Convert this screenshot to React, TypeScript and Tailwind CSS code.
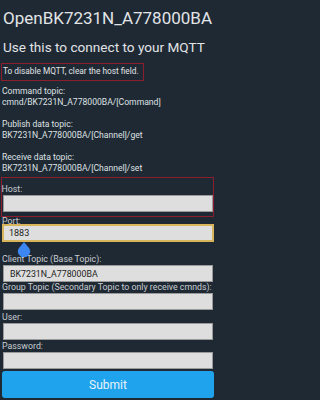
const font = { fontFamily: 'Roboto, "Noto Sans", sans-serif' };

function Field({ label, value, className = '' }: { label: string; value?: string; className?: string }) {
  return (
    <div className={className}>
      <label className="block text-[8.8px] leading-[11px] pl-[1px] text-[#c9cdd1]">{label}</label>
      <input
        readOnly
        value={value ?? ''}
        className="block w-[210px] h-[17px] ml-[2px] px-[6px] bg-[#dedede] border border-[#9a9a9a] text-[8.8px] text-[#222] outline-none"
      />
    </div>
  );
}

export default function App() {
  return (
    <div className="w-full min-h-[400px] bg-[#1e2934]">
      <div className="w-[217px] h-[400px] overflow-hidden text-[#e2e4e6] pl-[1px] pr-[3px]" style={font}>
        <h1 className="text-[17px] leading-[22px] pt-[7px] pl-[2px]">OpenBK7231N_A778000BA</h1>
        <h2 className="text-[13.6px] leading-[18px] mt-[9px] pl-[2px]">Use this to connect to your MQTT</h2>

        {/* warning */}
        <p className="mt-[7px] w-[143px] h-[18px] border-[1.5px] border-[#8c1d2c] text-[8.3px] leading-[15px] pl-[1px] whitespace-nowrap">
          To disable MQTT, clear the host field.
        </p>

        {/* topics */}
        <div className="mt-[5px] text-[8.6px] leading-[11px] pl-[1px] text-[#dfe1e3]">
          <div>Command topic:</div>
          <div>cmnd/BK7231N_A778000BA/[Command]</div>
          <div className="h-[11px]" />
          <div>Publish data topic:</div>
          <div>BK7231N_A778000BA/[Channel]/get</div>
          <div className="h-[11px]" />
          <div>Receive data topic:</div>
          <div>BK7231N_A778000BA/[Channel]/set</div>
        </div>

        <form className="mt-[3px]" onSubmit={(e) => e.preventDefault()}>
          <div className="w-[213px] h-[40px] border-[1.5px] border-[#8c1d2c] pt-[6px]">
            <Field label="Host:" className="-ml-[1.5px]" />
          </div>

          <div className="relative">
            <label className="block text-[8.8px] leading-[8px] pl-[1px] text-[#c9cdd1]">Port:</label>
            <input
              readOnly
              value="1883"
              className="block w-[212px] h-[18px] ml-[1px] mt-[-1px] px-[5px] bg-[#dedede] border-2 border-[#d8b45a] text-[9px] text-[#222] outline-none"
            />
            <svg className="absolute left-[16px] top-[25px]" width="14" height="15" viewBox="0 0 14 15">
              <path d="M7 0 L12 6 A6 6 0 1 1 2 6 Z" fill="#3b86f0" />
            </svg>
          </div>

          <Field label="Client Topic (Base Topic):" value="BK7231N_A778000BA" className="mt-[12px]" />
          <Field label="Group Topic (Secondary Topic to only receive cmnds):" />
          <Field label="User:" className="mt-[2px]" />
          <Field label="Password:" className="mt-[1px]" />

          <button
            type="submit"
            className="block w-[212px] h-[27px] ml-[1px] mt-[2px] rounded-[3px] bg-[#1fa3ec] text-[12px] text-[#e8f4fc]"
          >
            Submit
          </button>
        </form>
      </div>
    </div>
  );
}
